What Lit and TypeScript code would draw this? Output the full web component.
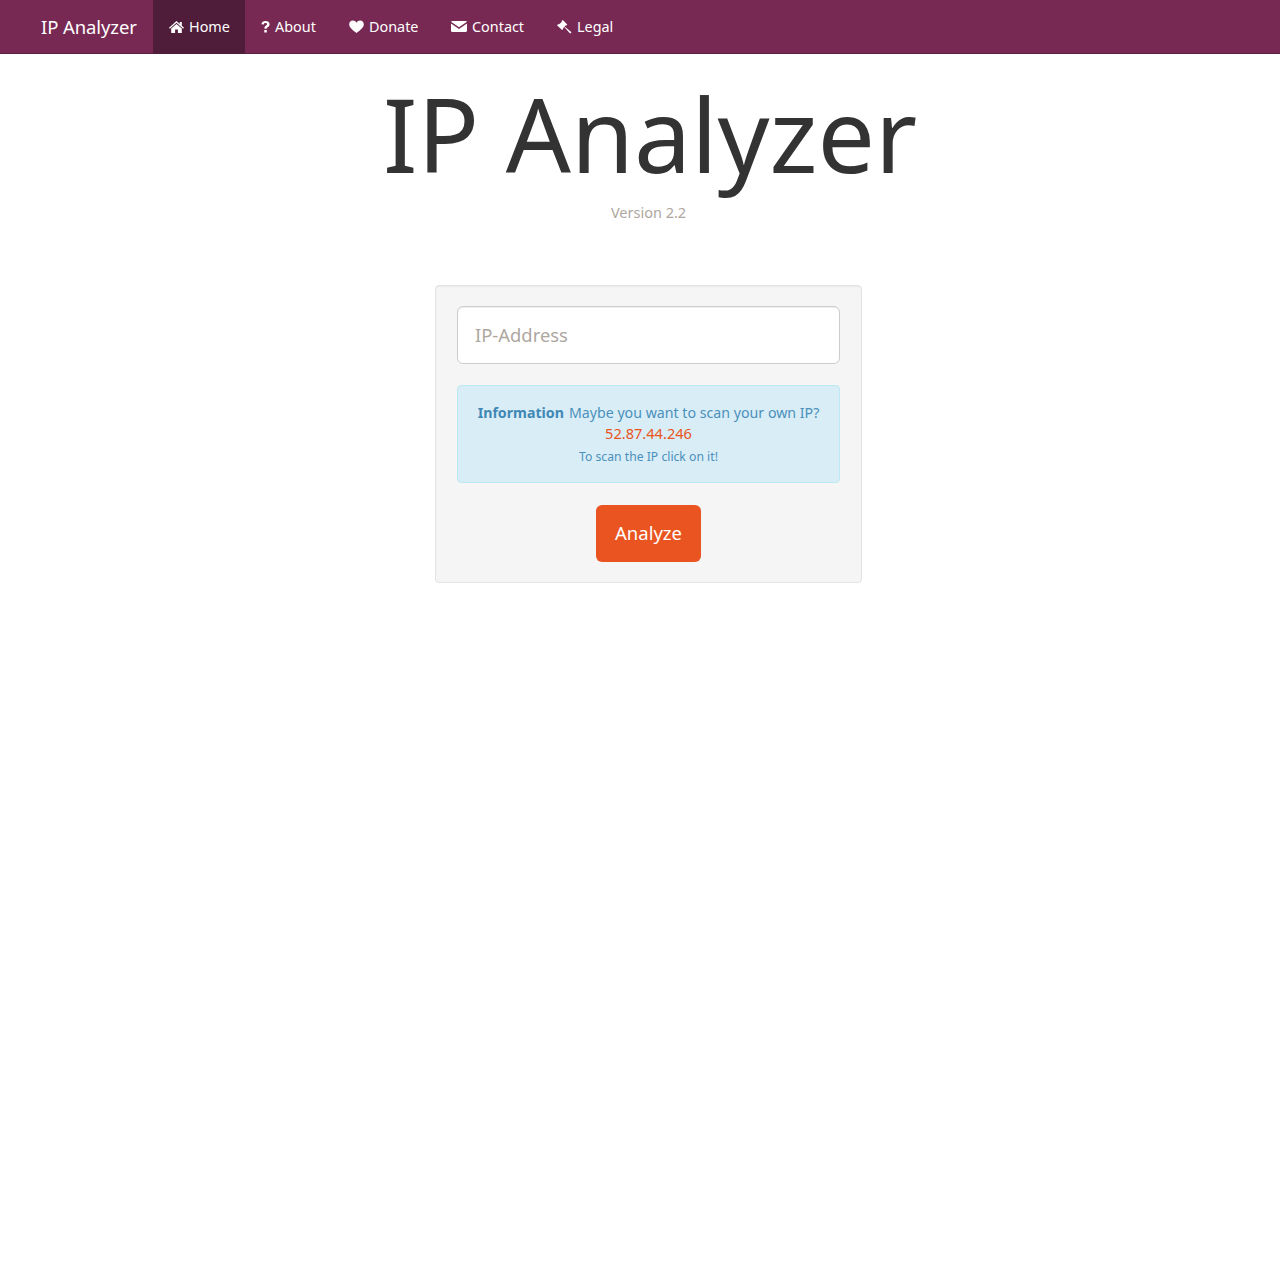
import { LitElement, html, css, svg } from "lit";
import { customElement } from "lit/decorators.js";

const icons: Record<string, any> = {
  home: svg`<path d="M7.500 0 10.700 2.900V1h2.100v3.800L15 6.800l-.8.9L7.500 1.800.8 7.700 0 6.800zM7.500 2.900l5.300 4.700V12H8.900V8.500H6.100V12H2.200V7.600z"/>`,
  q: svg`<path d="M.4 4.300C.7 2.100 2.300 1 4.500 1 6.900 1 8.600 2.200 8.600 4.200c0 1.500-.8 2.300-1.900 3-.8.5-1 .8-1 1.600H3.400c0-1.600.3-2.300 1.400-3 .9-.6 1.200-1 1.200-1.500 0-.7-.6-1.200-1.500-1.200-1 0-1.500.5-1.700 1.400zM3.300 9.900h2.500v2.600H3.300z"/>`,
  heart: svg`<path d="M7.500 13C3 9.600.2 7.300.2 4.200.2 2 1.900.5 3.900.5c1.500 0 2.800.8 3.600 2.200C8.300 1.300 9.600.5 11.100.5c2 0 3.700 1.500 3.700 3.700 0 3.100-2.800 5.400-7.300 8.800z"/>`,
  mail: svg`<path d="M1.200 0h13.600c.5 0 .9.300 1.100.8L8 6.200.1.800C.3.300.7 0 1.200 0zM0 2.500l8 5.400 8-5.400v7.300c0 .7-.5 1.200-1.200 1.200H1.200C.5 11 0 10.500 0 9.800z"/>`,
  legal: svg`<path d="M5.800 0 10.300 4.500 9 5.800l-.5-.4-1 1 6.400 5.300c.5.4.5 1 .1 1.400-.4.400-1 .4-1.400-.1L7.300 6.900 5.900 8.300l.5.5-1.300 1.300L0 5.200l1.300-1.300.5.5L5 1.700l-.5-.4z"/>`,
};

const items = [
  { label: "Home", icon: "home", w: 15, h: 12, box: 92, active: true },
  { label: "About", icon: "q", w: 9, h: 13, box: 88 },
  { label: "Donate", icon: "heart", w: 15, h: 13, box: 102 },
  { label: "Contact", icon: "mail", w: 16, h: 11, box: 106 },
  { label: "Legal", icon: "legal", w: 15, h: 14, box: 89 },
];

@customElement("app-root")
export class AppRoot extends LitElement {
  static styles = css`
    :host { display: block; font-family: "Noto Sans", "Open Sans", sans-serif; color: #333; min-height: 1280px; background: #fff; }
    .nav { display: flex; height: 54px; box-sizing: border-box; background: #772953; border-bottom: 1px solid #5e2043; padding-left: 41px; align-items: stretch; }
    .brand { color: #fff; font-size: 18.5px; line-height: 54px; width: 112px; flex: none; white-space: nowrap; letter-spacing: -0.1px; }
    .item { display: flex; flex: none; align-items: center; gap: 5px; padding: 0 0 2px 16px; color: #fff; font-size: 14.4px; white-space: nowrap; height: 54px; box-sizing: border-box; text-decoration: none; }
    .item.active { background: #4f1c39; }
    .item svg { fill: #fff; display: block; flex: none; margin-top: 1px; }
    main { display: flex; flex-direction: column; align-items: center; padding-left: 17px; }
    h1 { margin: 20px 0 0 3px; font-size: 102px; font-weight: 400; line-height: 120px; color: #333; white-space: nowrap; }
    .version { margin-top: 8px; color: #aea79f; font-size: 14.5px; line-height: 20px; }
    .panel { margin-top: 63px; width: 427px; box-sizing: border-box; background: #f5f5f5; border: 1px solid #e3e3e3; border-radius: 4px; padding: 20px 21px 20px; display: flex; flex-direction: column; align-items: center; box-shadow: inset 0 1px 1px rgba(0,0,0,.05); }
    input { width: 100%; height: 58px; box-sizing: border-box; border: 1px solid #ccc; border-radius: 6px; padding: 0 17px 2px; font: 18.4px "Noto Sans", sans-serif; background: #fff; color: #333; outline: none; box-shadow: inset 0 1px 1px rgba(0,0,0,.075); }
    input::placeholder { color: #aea79f; opacity: 1; }
    .alert { margin-top: 21px; width: 100%; height: 98px; box-sizing: border-box; background: #d9edf7; border: 1px solid #bce8f1; border-radius: 4px; color: #4a90bb; text-align: center; font-size: 14.2px; line-height: 21px; padding-top: 16px; white-space: nowrap; }
    .alert b { font-weight: 700; color: #3f88b5; margin-right: 5px; }
    .ip { color: #e95420; display: block; font-size: 14.6px; }
    .alert small { display: block; font-size: 12.2px; line-height: 25px; }
    button { margin-top: 22px; height: 57px; width: 105px; border: 0; border-radius: 6px; background: #e95420; color: #fff; font: 18.5px "Noto Sans", sans-serif; padding: 0 0 2px; }
  `;

  render() {
    return html`
      <nav class="nav">
        <span class="brand">IP Analyzer</span>
        ${items.map(
          (i) => html`<a class="item ${i.active ? "active" : ""}" style="width:${i.box}px">
            <svg viewBox="0 0 ${i.w} ${i.h}" width=${i.w} height=${i.h}>${icons[i.icon]}</svg>${i.label}
          </a>`
        )}
      </nav>
      <main>
        <h1>IP Analyzer</h1>
        <div class="version">Version 2.2</div>
        <div class="panel">
          <input placeholder="IP-Address" />
          <div class="alert">
            <b>Information</b>Maybe you want to scan your own IP?
            <span class="ip">52.87.44.246</span>
            <small>To scan the IP click on it!</small>
          </div>
          <button>Analyze</button>
        </div>
      </main>
    `;
  }
}
